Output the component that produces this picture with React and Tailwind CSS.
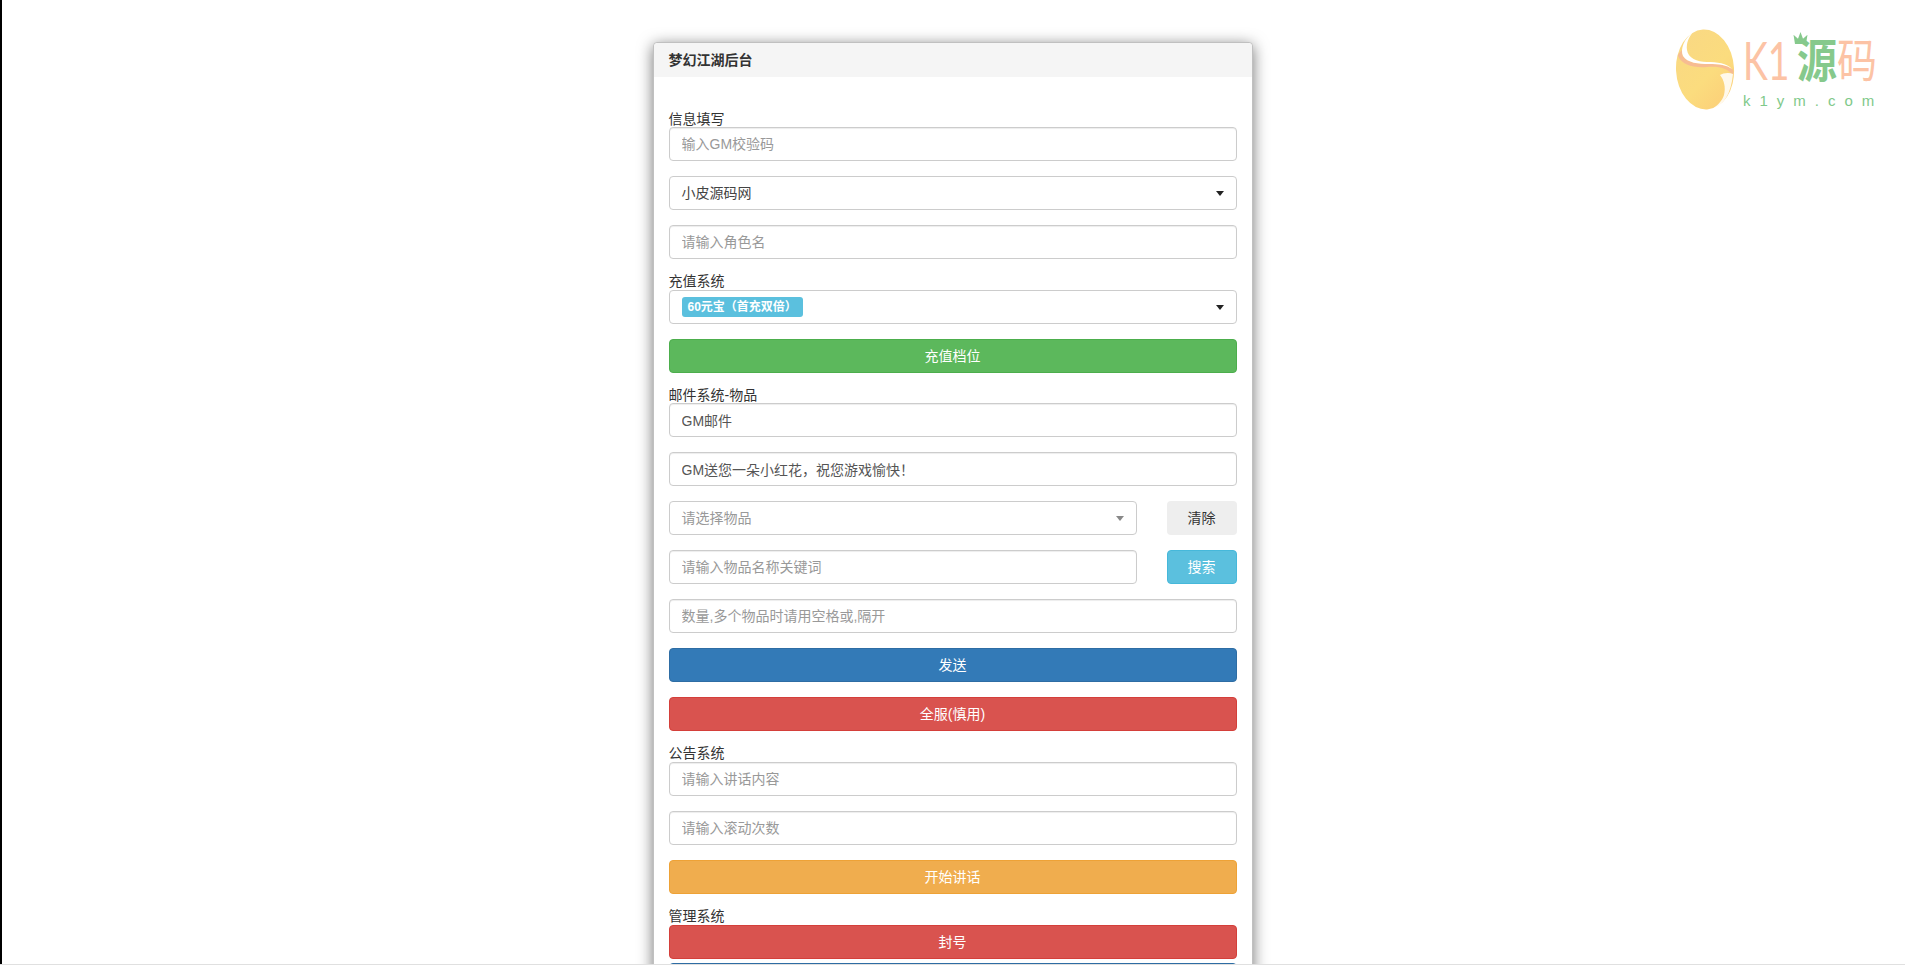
import React from 'react';

const FONT = { fontFamily: '"Liberation Sans", "Noto Sans CJK SC", sans-serif' };

const TextInput = ({ placeholder, value, className = '' }) => (
    <input
        readOnly
        placeholder={placeholder}
        value={value}
        className={`block w-full h-[34px] px-3 py-1.5 text-sm text-[#555] bg-white border border-[#ccc] rounded outline-none placeholder:text-[#999] shadow-[inset_0_1px_1px_rgba(0,0,0,0.075)] ${className}`}
    />
);

const Caret = ({ color = 'border-t-[#222]' }) => (
    <span className={`w-0 h-0 border-x-4 border-x-transparent border-t-[5px] ${color}`} />
);

const SelectBox = ({ children, caret }) => (
    <div className="flex items-center justify-between h-[34px] pl-[10px] pr-[12px] text-sm bg-white border border-[#ccc] rounded">
        {children}
        <Caret color={caret} />
    </div>
);

const Btn = ({ className, children }) => (
    <button className={`block w-full h-[34px] text-sm text-white border rounded ${className}`}>{children}</button>
);

const Label = ({ height = 'h-[16px]', leading = 'leading-[14px]', children }) => (
    <div className={`${height} ${leading} text-sm text-[#333] mt-[15px] whitespace-nowrap`}>{children}</div>
);

const Logo = () => (
    <div className="absolute left-[1675px] top-[29px] flex gap-[8px]">
        <svg width="60" height="81" viewBox="0 0 60 81">
            <defs>
                <linearGradient id="egg" x1="0.1" y1="0" x2="0.8" y2="1">
                    <stop offset="0" stopColor="#f9d884" />
                    <stop offset="0.6" stopColor="#fbdc7e" />
                    <stop offset="1" stopColor="#fccf78" />
                </linearGradient>
            </defs>
            <ellipse cx="30" cy="40.5" rx="29" ry="40" fill="url(#egg)" transform="rotate(-3 30 40)" />
            <path d="M3 27C7 36 18 39 32 38C44 37 52 39 58 46C59 42 58 40 57 40C52 36 44 35 34 35C24 35 12 34 8 27C7 25 7 23 7 21C5 23 3 25 3 27Z" fill="#f7bc92" />
            <path d="M18 3C9 10 5 20 8 27C12 34 24 35 34 35C44 35 52 36 57 40C52 34 42 33 32 33C22 33 13 29 12 21C11 14 14 8 18 3Z" fill="#fff" />
            <path d="M58 45C54 43 48 44 45 46C49 51 51 58 49 66C47 72 43 76 37 80C49 76 56 65 58 45Z" fill="#fff" opacity="0.85" />
        </svg>
        <div className="flex flex-col pt-[7px]">
            <div className="flex h-[50px] text-[#fcc3a5] whitespace-nowrap">
                <span className="w-[54px] text-[52px] leading-[48px] font-normal origin-top-left scale-x-[0.72]" style={{ fontFamily: 'Lato, sans-serif' }}>K1</span>
                <span className="relative text-[#86c98c] font-bold text-[40px] leading-[44px] origin-top scale-y-[1.15]">
                    源
                    <svg className="absolute left-[-4px] top-[-4px]" width="15" height="11" viewBox="0 0 15 11">
                        <path d="M2 11L0.5 3L5 6.5L7.5 0.5L10 6.5L14.5 3L13 11Z" fill="#86c98c" />
                    </svg>
                </span>
                <span className="text-[40px] leading-[44px] origin-top scale-y-[1.15]">码</span>
            </div>
            <div className="text-[15px] leading-[16px] mt-[7px] tracking-[9px] text-[#7fc98a] whitespace-nowrap">k1ym.com</div>
        </div>
    </div>
);

export default function App() {
    return (
        <div className="relative h-[965px] overflow-hidden bg-white" style={FONT}>
            <div className="absolute left-0 top-0 bottom-0 w-[2px] bg-black" />
            <Logo />

            <div className="w-[600px] mx-auto pt-[42px]">
                <div className="bg-white border border-[#c0c0c0] rounded shadow-[0_3px_15px_rgba(0,0,0,0.55)]">
                    <div className="h-[34px] px-[15px] flex items-center bg-[#f5f5f5] text-sm font-bold text-[#333] rounded-t">梦幻江湖后台</div>
                    <div className="px-[15px] pt-[19px]">
                        <Label leading="leading-[16px]">信息填写</Label>
                        <TextInput placeholder="输入GM校验码" />
                        <div className="mt-[15px]">
                            <SelectBox caret="border-t-[#222]"><span className="text-[#444] pl-[2px]">小皮源码网</span></SelectBox>
                        </div>
                        <TextInput placeholder="请输入角色名" className="mt-[15px]" />

                        <Label>充值系统</Label>
                        <SelectBox caret="border-t-[#222]">
                            <span className="ml-[2px] w-[121px] h-[20px] leading-[20px] px-[6px] rounded-[3px] bg-[#5bc0de] text-white text-xs font-bold">60元宝（首充双倍）</span>
                        </SelectBox>
                        <Btn className="mt-[15px] bg-[#5cb85c] border-[#4cae4c]">充值档位</Btn>

                        <Label height="h-[15px]">邮件系统-物品</Label>
                        <TextInput value="GM邮件" />
                        <TextInput value="GM送您一朵小红花，祝您游戏愉快！" className="mt-[15px]" />
                        <div className="grid grid-cols-[468px_70px] justify-between mt-[15px]">
                            <SelectBox caret="border-t-[#888]"><span className="text-[#999] pl-[2px]">请选择物品</span></SelectBox>
                            <button className="h-[34px] text-sm text-[#333] bg-[#eee] rounded">清除</button>
                        </div>
                        <div className="grid grid-cols-[468px_70px] justify-between mt-[15px]">
                            <TextInput placeholder="请输入物品名称关键词" />
                            <button className="h-[34px] text-sm text-white bg-[#5bc0de] border border-[#46b8da] rounded">搜索</button>
                        </div>
                        <TextInput placeholder="数量,多个物品时请用空格或,隔开" className="mt-[15px]" />
                        <Btn className="mt-[15px] bg-[#337ab7] border-[#2e6da4]">发送</Btn>
                        <Btn className="mt-[15px] bg-[#d9534f] border-[#d43f3a]">全服(慎用)</Btn>

                        <Label>公告系统</Label>
                        <TextInput placeholder="请输入讲话内容" />
                        <TextInput placeholder="请输入滚动次数" className="mt-[15px]" />
                        <Btn className="mt-[15px] bg-[#f0ad4e] border-[#eea236]">开始讲话</Btn>

                        <Label>管理系统</Label>
                        <Btn className="bg-[#d9534f] border-[#d43f3a]">封号</Btn>
                        <Btn className="mt-[4px] bg-[#337ab7] border-[#2e6da4]" />
                    </div>
                </div>
            </div>
            <div className="absolute left-0 right-0 bottom-0 h-px bg-[#e0e0e0]" />
        </div>
    );
}
